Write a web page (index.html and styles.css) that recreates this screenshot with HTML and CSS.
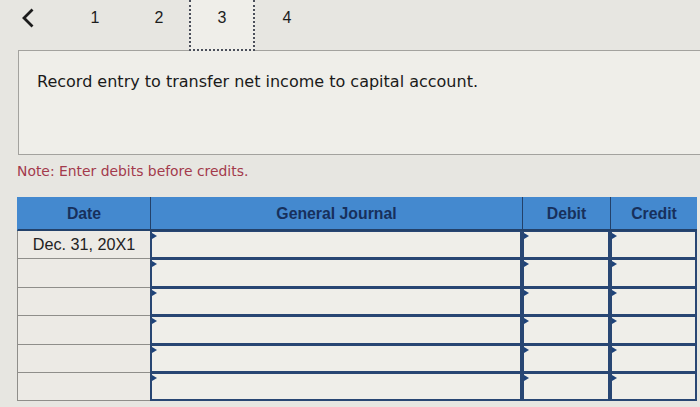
FILE: index.html
```html
<!DOCTYPE html>
<html>
<head>
<meta charset="utf-8">
<link rel="stylesheet" href="styles.css">
</head>
<body>
<div class="nav">
  <div class="back"><svg width="16" height="22" viewBox="0 0 16 22"><path d="M12.5 2.5 L4 11 L12.5 19.5" fill="none" stroke="#1c1c1c" stroke-width="2.8"/></svg></div>
  <div class="tabs">
    <div class="tab">1</div>
    <div class="tab">2</div>
    <div class="tab active">3</div>
    <div class="tab">4</div>
  </div>
</div>
<div class="question">Record entry to transfer net income to capital account.</div>
<div class="note">Note: Enter debits before credits.</div>
<table class="journal">
  <colgroup>
    <col class="w-date"><col class="w-gj"><col class="w-dr"><col class="w-cr">
  </colgroup>
  <thead>
    <tr><th class="c-date">Date</th><th>General Journal</th><th>Debit</th><th>Credit</th></tr>
  </thead>
  <tbody>
    <tr><td class="date">Dec. 31, 20X1</td><td class="in"><div class="box"></div></td><td class="in"><div class="box"></div></td><td class="in"><div class="box"></div></td></tr>
    <tr><td class="date"></td><td class="in"><div class="box"></div></td><td class="in"><div class="box"></div></td><td class="in"><div class="box"></div></td></tr>
    <tr><td class="date"></td><td class="in"><div class="box"></div></td><td class="in"><div class="box"></div></td><td class="in"><div class="box"></div></td></tr>
    <tr><td class="date"></td><td class="in"><div class="box"></div></td><td class="in"><div class="box"></div></td><td class="in"><div class="box"></div></td></tr>
    <tr><td class="date"></td><td class="in"><div class="box"></div></td><td class="in"><div class="box"></div></td><td class="in"><div class="box"></div></td></tr>
    <tr><td class="date"></td><td class="in"><div class="box"></div></td><td class="in"><div class="box"></div></td><td class="in"><div class="box"></div></td></tr>
  </tbody>
</table>
</body>
</html>
```
FILE: styles.css
```css
html, body { margin: 0; padding: 0; }
body {
  width: 700px;
  height: 407px;
  overflow: hidden;
  background: #e7e6e1;
  font-family: "Liberation Sans", Arial, sans-serif;
  color: #1c1c1c;
}
.nav {
  display: flex;
  height: 50px;
  align-items: stretch;
}
.back {
  width: 63px;
  padding: 7px 0 0 20px;
  box-sizing: border-box;
}
.tabs { display: flex; }
.tab {
  width: 64px;
  text-align: center;
  font-size: 16px;
  padding-top: 9px;
  box-sizing: border-box;
}
.tab.active {
  background: #efeee9;
  border: 2px dotted #4b4f5a;
  border-top: none;
  height: 51px;
  margin-left: -2px;
  width: 66px;
  position: relative;
  z-index: 1;
}
.question {
  margin-left: 18px;
  height: 105px;
  box-sizing: border-box;
  border: 1px solid #a3a29e;
  border-right: none;
  background: #efeee9;
  padding: 21px 0 0 18px;
  font-family: "DejaVu Sans", Verdana, sans-serif;
  font-size: 16px;
  color: #1a1a1a;
}
.note {
  margin: 8px 0 0 17px;
  height: 34px;
  font-family: "DejaVu Sans", Verdana, sans-serif;
  font-size: 13.9px;
  color: #a33a4c;
}
.journal {
  margin-left: 17px;
  width: 680px;
  border-collapse: separate;
  border-spacing: 0;
  table-layout: fixed;
}
.w-date { width: 133px; }
.w-gj { width: 372px; }
.w-dr { width: 88px; }
.w-cr { width: 87px; }
.journal th {
  height: 30px;
  background: #4489cf;
  color: #17305c;
  font-weight: bold;
  font-size: 15.8px;
  border-left: 1px solid #23416a;
  border-bottom: 2px solid #23416a;
  padding: 2px 0 0 0;
}
.journal th.c-date { border-left: 1px solid #4489cf; }
.journal td {
  height: 28.4px;
  padding: 0;
}
.journal td.date {
  background: #eceae5;
  border-left: 1px solid #8f8e8a;
  border-bottom: 1px solid #8f8e8a;
  font-size: 16.2px;
  text-align: center;
  color: #232323;
  box-sizing: border-box;
}
.journal td.in { vertical-align: top; }
.box {
  position: relative;
  height: 28.4px;
  box-sizing: border-box;
  border: 2px solid #284673;
  border-top-width: 1px;
  background: #efeee9;
}
.box::before {
  content: "";
  position: absolute;
  left: 0;
  top: 1px;
  border-left: 5px solid #1f437a;
  border-top: 3px solid transparent;
  border-bottom: 3px solid transparent;
}
```
